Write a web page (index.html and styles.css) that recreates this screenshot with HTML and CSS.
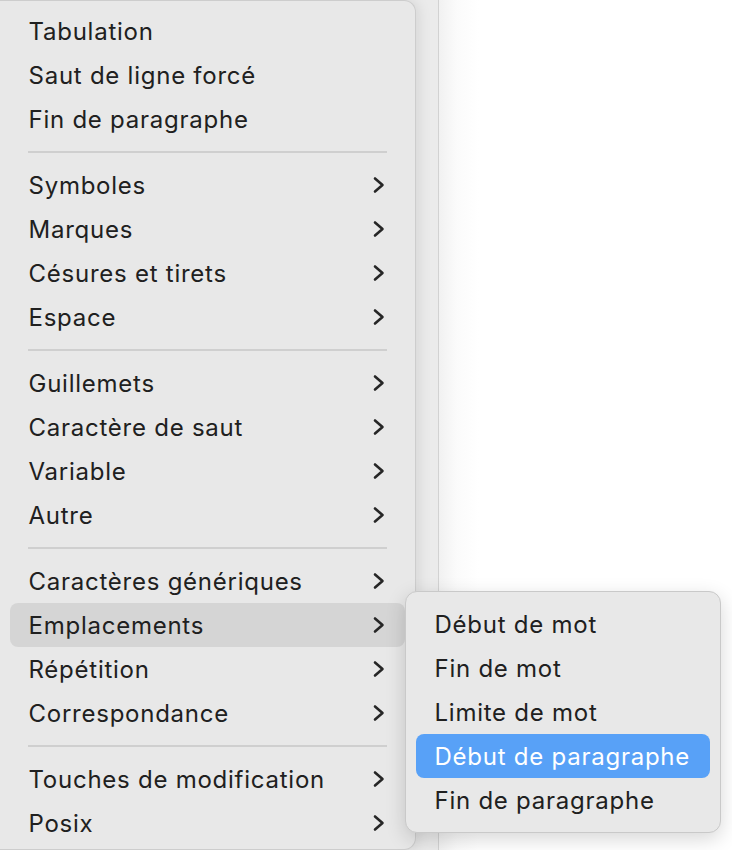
FILE: index.html
```html
<!DOCTYPE html>
<html lang="fr">
<head>
<meta charset="utf-8">
<title>Menu</title>
<link rel="stylesheet" href="styles.css">
</head>
<body>
<div class="backdrop">
  <div class="side"></div>
  <div class="pane"></div>
</div>

<div class="menu main-menu">
  <div class="item"><span>Tabulation</span></div>
  <div class="item"><span>Saut de ligne forcé</span></div>
  <div class="item"><span>Fin de paragraphe</span></div>
  <div class="sep"></div>
  <div class="item"><span>Symboles</span><svg class="chev" viewBox="0 0 12 18"><path d="M2 2.5 L9.5 9 L2 15.5"/></svg></div>
  <div class="item"><span>Marques</span><svg class="chev" viewBox="0 0 12 18"><path d="M2 2.5 L9.5 9 L2 15.5"/></svg></div>
  <div class="item"><span>Césures et tirets</span><svg class="chev" viewBox="0 0 12 18"><path d="M2 2.5 L9.5 9 L2 15.5"/></svg></div>
  <div class="item"><span>Espace</span><svg class="chev" viewBox="0 0 12 18"><path d="M2 2.5 L9.5 9 L2 15.5"/></svg></div>
  <div class="sep"></div>
  <div class="item"><span>Guillemets</span><svg class="chev" viewBox="0 0 12 18"><path d="M2 2.5 L9.5 9 L2 15.5"/></svg></div>
  <div class="item"><span>Caractère de saut</span><svg class="chev" viewBox="0 0 12 18"><path d="M2 2.5 L9.5 9 L2 15.5"/></svg></div>
  <div class="item"><span>Variable</span><svg class="chev" viewBox="0 0 12 18"><path d="M2 2.5 L9.5 9 L2 15.5"/></svg></div>
  <div class="item"><span>Autre</span><svg class="chev" viewBox="0 0 12 18"><path d="M2 2.5 L9.5 9 L2 15.5"/></svg></div>
  <div class="sep"></div>
  <div class="item"><span>Caractères génériques</span><svg class="chev" viewBox="0 0 12 18"><path d="M2 2.5 L9.5 9 L2 15.5"/></svg></div>
  <div class="item open"><span>Emplacements</span><svg class="chev" viewBox="0 0 12 18"><path d="M2 2.5 L9.5 9 L2 15.5"/></svg></div>
  <div class="item"><span>Répétition</span><svg class="chev" viewBox="0 0 12 18"><path d="M2 2.5 L9.5 9 L2 15.5"/></svg></div>
  <div class="item"><span>Correspondance</span><svg class="chev" viewBox="0 0 12 18"><path d="M2 2.5 L9.5 9 L2 15.5"/></svg></div>
  <div class="sep"></div>
  <div class="item"><span>Touches de modification</span><svg class="chev" viewBox="0 0 12 18"><path d="M2 2.5 L9.5 9 L2 15.5"/></svg></div>
  <div class="item"><span>Posix</span><svg class="chev" viewBox="0 0 12 18"><path d="M2 2.5 L9.5 9 L2 15.5"/></svg></div>
</div>

<div class="menu sub-menu">
  <div class="item"><span>Début de mot</span></div>
  <div class="item"><span>Fin de mot</span></div>
  <div class="item"><span>Limite de mot</span></div>
  <div class="item selected"><span>Début de paragraphe</span></div>
  <div class="item"><span>Fin de paragraphe</span></div>
</div>
</body>
</html>
```

FILE: styles.css
```css
html, body {
  margin: 0;
  padding: 0;
  width: 732px;
  height: 850px;
  overflow: hidden;
  background: #ffffff;
  font-family: Inter, "Liberation Sans", sans-serif;
}

.backdrop {
  display: flex;
  height: 850px;
}

.side {
  width: 438px;
  background: #ebebeb;
  border-right: 1px solid #d2d2d2;
}

.pane {
  flex: 1;
  background: linear-gradient(to right, #f1f1f1 0px, #fbfbfb 18px, #ffffff 40px);
}

.menu {
  position: absolute;
  box-sizing: border-box;
  background: #e8e8e8;
  color: #202020;
  font-size: 24px;
  letter-spacing: 0.75px;
}

.main-menu {
  left: -20px;
  top: 0;
  width: 436px;
  height: 850px;
  padding: 8px 10px 6px 30px;
  border-radius: 12px;
  border: 1px solid #cdcdcd;
  border-left: none;
  box-shadow: 2px 0 14px rgba(0, 0, 0, 0.10);
}

.sub-menu {
  left: 405px;
  top: 591px;
  width: 316px;
  padding: 10px 10px 10px;
  border-radius: 12px;
  border: 1px solid #c9c9c9;
  box-shadow: 0 6px 20px rgba(0, 0, 0, 0.16);
}

.item {
  height: 44px;
  display: flex;
  align-items: center;
  justify-content: space-between;
  padding: 0 20px 0 18.5px;
  border-radius: 8px;
  white-space: nowrap;
}

.item span {
  line-height: 44px;
  padding-top: 1px;
}

.item.open {
  background: #d5d5d5;
}

.item.selected {
  background: #58a1f7;
  color: #ffffff;
}

.chev {
  width: 12px;
  height: 18px;
  flex: none;
}

.chev path {
  fill: none;
  stroke: #262626;
  stroke-width: 2.6;
  stroke-linecap: round;
  stroke-linejoin: round;
}

.sep {
  height: 1.5px;
  background: #cfcfcf;
  margin: 10px 18px 10.5px 18px;
}
```
